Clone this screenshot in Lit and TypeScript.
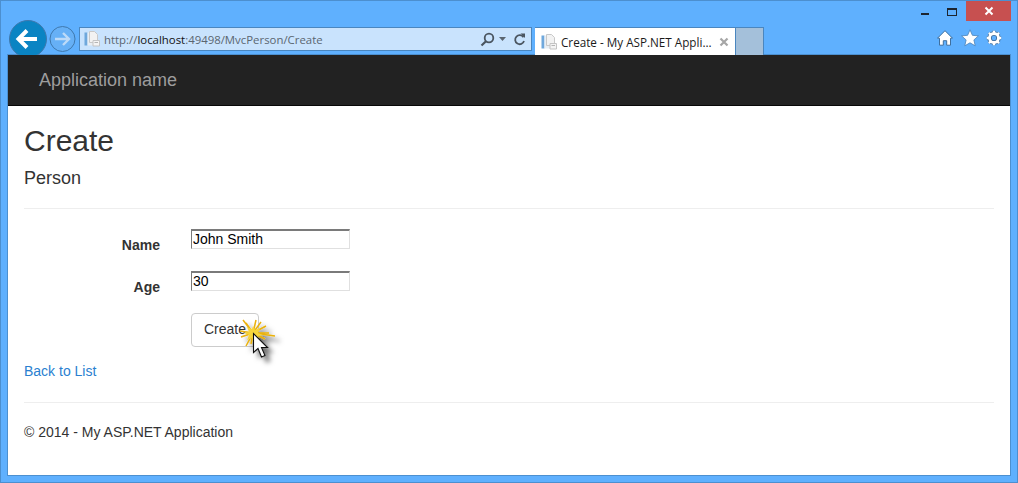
import { LitElement, html, css, svg } from "lit";
import { customElement } from "lit/decorators.js";

const pageIcon = svg`<svg class="pageicon" width="16" height="16" viewBox="0 0 16 16">
  <rect x="0.5" y="1.5" width="3" height="13" fill="#6fa8dc"/>
  <rect x="3.5" y="1.5" width="6" height="13" fill="#e8eef4"/>
  <path d="M5.5 0.5h5l3 3v8h-8z" fill="#f2f2f2" stroke="#c8c8c8"/>
  <path d="M9 9.5h6.5v5.5H9z" fill="#f4f4f4" stroke="#c4c4c4"/>
  <path d="M10.5 11.5h3.500" stroke="#b5b5b5"/>
</svg>`;

const gearTeeth = "M8 .8v3M8 12.200v3M.8 8h3M12.200 8h3M2.900 2.900l2.100 2.100M11 11l2.100 2.100M13.100 2.900L11 5M5 11l-2.100 2.100";

@customElement("app-root")
export class AppRoot extends LitElement {
  static styles = css`
    :host {
      display: block;
      width: 1018px;
      height: 483px;
      overflow: hidden;
      font-family: "Liberation Sans", Arial, sans-serif;
      font-size: 14px;
      color: #333;
    }
    .window {
      position: relative;
      box-sizing: border-box;
      width: 1018px;
      height: 483px;
      display: flex;
      flex-direction: column;
      background: #5fb0fe;
      border: 1px solid #4c8fcf;
      padding: 0 7px 7px 7px;
    }
    .titlebar {
      display: flex;
      justify-content: flex-end;
      height: 26px;
      margin-right: -7px;
    }
    .caption {
      display: flex;
      align-items: flex-start;
    }
    .cap-min {
      width: 8px;
      height: 2px;
      background: #1c2530;
      margin: 12px 18px 0 0;
    }
    .cap-max {
      box-sizing: border-box;
      width: 10px;
      height: 8px;
      border: 1px solid #1c2530;
      border-top-width: 2px;
      margin: 7px 9px 0 0;
    }
    .cap-close {
      width: 45px;
      height: 20px;
      background: #c75050;
      display: flex;
      align-items: center;
      justify-content: center;
      margin-right: 6px;
    }
    .toolbar {
      position: relative;
      z-index: 1;
      display: flex;
      align-items: flex-start;
      height: 28px;
    }
    .nav {
      width: 71px;
      flex: none;
    }
    .address {
      box-sizing: border-box;
      width: 453px;
      height: 24px;
      flex: none;
      display: flex;
      align-items: center;
      background: #c9e3fd;
      border: 1px solid #4a86bf;
      padding: 0 5px 0 4px;
      font-family: "Open Sans", sans-serif;
      font-size: 11.4px;
      color: #5b6670;
    }
    .address .url {
      margin-left: 4px;
      flex: 1;
      white-space: nowrap;
    }
    .address b {
      font-weight: 400;
      color: #111;
    }
    .addr-tools {
      display: flex;
      align-items: center;
      gap: 4px;
    }
    .caret {
      margin-right: 3px;
    }
    .tab {
      box-sizing: border-box;
      width: 200px;
      height: 28px;
      flex: none;
      margin-left: 3px;
      display: flex;
      align-items: center;
      gap: 4px;
      padding: 0 6px 0 6px;
      background: #fff;
      font-family: "Open Sans", sans-serif;
      font-size: 11.7px;
      color: #1a1a1a;
      white-space: nowrap;
      border-top: 1px solid #4a86bf;
    }
    .tab .title {
      flex: 1;
    }
    .newtab {
      box-sizing: border-box;
      width: 29px;
      height: 28px;
      flex: none;
      background: #a4c0da;
      border: 1px solid #4a86bf;
      border-bottom: none;
    }
    .tools {
      margin-left: auto;
      display: flex;
      align-items: center;
      gap: 7px;
      height: 22px;
      padding: 0 8px 0 0;
    }
    .home {
      margin-right: 1px;
    }
    .page {
      flex: 1;
      display: flex;
      flex-direction: column;
      background: #fff;
      min-height: 0;
      box-shadow: 0 0 0 1px #4c90d0;
    }
    .navbar {
      box-sizing: border-box;
      height: 51px;
      flex: none;
      background: #222;
      border-bottom: 1px solid #080808;
      padding: 15px 31px;
      font-size: 18px;
      line-height: 20px;
      color: #9d9d9d;
    }
    .body {
      flex: 1;
      padding: 0 16px;
      display: flex;
      flex-direction: column;
    }
    h1 {
      margin: 17px 0 0;
      font-size: 30px;
      font-weight: 400;
      line-height: 36px;
    }
    h4 {
      margin: 9px 0 0;
      font-size: 18px;
      font-weight: 400;
      line-height: 20px;
    }
    hr {
      width: 100%;
      height: 1px;
      border: 0;
      background: #eee;
      margin: 0;
    }
    .h1 {
      margin-top: 20px;
    }
    .form {
      display: grid;
      grid-template-columns: 136px 1fr;
      column-gap: 31px;
      row-gap: 16px;
      margin-top: 20px;
      justify-items: start;
    }
    label {
      justify-self: end;
      font-weight: 700;
      line-height: 20px;
      margin-top: 6px;
    }
    input {
      box-sizing: border-box;
      width: 159px;
      height: 20px;
      margin: 0;
      padding: 0 0 2px 1px;
      background: #fff;
      border-style: solid;
      border-width: 2px 1px 1px 1px;
      border-color: #7a7a7a #e0e0e0 #e0e0e0 #7a7a7a;
      font: 14px "Liberation Sans", Arial, sans-serif;
      color: #000;
      outline: none;
    }
    .button {
      grid-column: 2;
      box-sizing: border-box;
      width: 68px;
      height: 34px;
      margin: 0;
      padding: 0 0 2px;
      background: #fff;
      border: 1px solid #ccc;
      border-radius: 4px;
      font: 14px "Liberation Sans", Arial, sans-serif;
      color: #333;
    }
    a {
      display: block;
      margin-top: 14px;
      line-height: 20px;
      color: #2a7fd0;
      text-decoration: none;
    }
    .foot-hr {
      margin-top: 21px;
    }
    footer {
      margin-top: 19px;
      line-height: 20px;
    }
    .navbtns {
      position: absolute;
      left: 8px;
      top: 19px;
      z-index: 2;
      pointer-events: none;
    }
    .cursor {
      position: absolute;
      left: 229px;
      top: 318px;
      pointer-events: none;
    }
  `;

  render() {
    return html`
      <div class="window">
        <div class="titlebar">
          <div class="caption">
            <div class="cap-min"></div>
            <div class="cap-max"></div>
            <div class="cap-close">
              <svg width="10" height="10" viewBox="0 0 10 10"><path d="M1.500 1.500l7 7M8.500 1.500l-7 7" stroke="#fff" stroke-width="2"/></svg>
            </div>
          </div>
        </div>
        <div class="toolbar">
          <div class="nav"></div>
          <div class="address">
            ${pageIcon}
            <span class="url">http://<b>localhost</b>:49498/MvcPerson/Create</span>
            <span class="addr-tools">
              <svg width="15" height="15" viewBox="0 0 15 15"><circle cx="9" cy="6" r="4.300" fill="none" stroke="#4a5560" stroke-width="1.800"/><path d="M6 9.200L1.500 13.500" stroke="#4a5560" stroke-width="2.200"/></svg>
              <svg class="caret" width="7" height="4" viewBox="0 0 7 4"><path d="M0 0h7L3.500 4z" fill="#5a6570"/></svg>
              <svg width="13" height="15" viewBox="0 0 13 15"><path d="M10.500 5.300A4.500 4.500 0 1 0 11 9" fill="none" stroke="#4a5560" stroke-width="1.800"/><path d="M7.500 1.500h4.500v4.500z" fill="#4a5560"/></svg>
            </span>
          </div>
          <div class="tab">
            ${pageIcon}
            <span class="title">Create - My ASP.NET Appli...</span>
            <svg width="10" height="10" viewBox="0 0 10 10"><path d="M1.500 1.500l7 7M8.500 1.500l-7 7" stroke="#a6a6a6" stroke-width="2.200"/></svg>
          </div>
          <div class="newtab"></div>
          <div class="tools">
            <svg class="home" width="16" height="16" viewBox="0 0 16 16"><path d="M8 .7L15.500 8.200h-2v7H9.700v-4.500H6.300v4.500H2.500v-7h-2z" fill="#fff" stroke="#3f6f9e" stroke-width="1"/></svg>
            <svg width="18" height="18" viewBox="0 0 18 18"><path d="M9 .8l2.400 5.500 6 .6-4.500 4 1.300 5.900L9 13.800l-5.200 3 1.300-5.900-4.500-4 6-.6z" fill="#fff" stroke="#4a82b8" stroke-width=".8"/></svg>
            <svg width="16" height="16" viewBox="0 0 16 16">
              <path d=${gearTeeth} stroke="#3f6f9e" stroke-width="3.400"/>
              <circle cx="8" cy="8" r="4.500" fill="none" stroke="#3f6f9e" stroke-width="4.500"/>
              <path d=${gearTeeth} stroke="#fff" stroke-width="2.400"/>
              <circle cx="8" cy="8" r="4.500" fill="none" stroke="#fff" stroke-width="2.800"/>
            </svg>
          </div>
        </div>
        <div class="page">
          <div class="navbar">Application name</div>
          <div class="body">
            <h1>Create</h1>
            <h4>Person</h4>
            <hr class="h1" />
            <div class="form">
              <label>Name</label>
              <input .value=${"John Smith"} />
              <label>Age</label>
              <input .value=${"30"} />
              <button class="button">Create</button>
            </div>
            <a href="#">Back to List</a>
            <hr class="foot-hr" />
            <footer>© 2014 - My ASP.NET Application</footer>
          </div>
        </div>
        <svg class="navbtns" width="72" height="35" viewBox="0 0 72 35">
          <circle cx="19" cy="19" r="18.500" fill="#0a84c3" stroke="#3f78ad"/>
          <path d="M10 19h18M18 10.500L9.500 19l8.500 8.500" fill="none" stroke="#fff" stroke-width="4"/>
          <circle cx="53.500" cy="19" r="12.500" fill="#66b0f6" stroke="#3f78ad"/>
          <path d="M46 19h13M54 13l6 6-6 6" fill="none" stroke="#bcdaf8" stroke-width="2.400"/>
        </svg>
        <svg class="cursor" width="60" height="54" viewBox="0 0 60 54">
          <defs>
            <filter id="s" x="-30%" y="-30%" width="170%" height="170%">
              <feDropShadow dx="5" dy="5" stdDeviation="2.500" flood-color="#000" flood-opacity=".55"/>
            </filter>
          </defs>
          <g filter="url(#s)">
            <path d="M23 14l-10-13M23 14l3-13M23 14l13-7M23 14l22 3M23 14l12 6M23 14l-7 13M23 14l-12 4M23 14l-13-2M23 14l-7-10M23 14l8-11M23 14l16 0M23 14l-2 11" stroke="#eab109" stroke-width="1.500"/>
            <path d="M23 7l2 4 5-2-2 5 5 2-5 1 2 5-5-3-2 5-1-5-5 2 2-5-5-2 5-1-2-5 5 2z" fill="#f6d43a"/>
            <path d="M23.500 14.500v19l4.500-4 3.500 8.500 3.500-1.500-3.500-8h6z" fill="#fff" stroke="#111" stroke-width="1.100"/>
          </g>
        </svg>
      </div>
    `;
  }
}
